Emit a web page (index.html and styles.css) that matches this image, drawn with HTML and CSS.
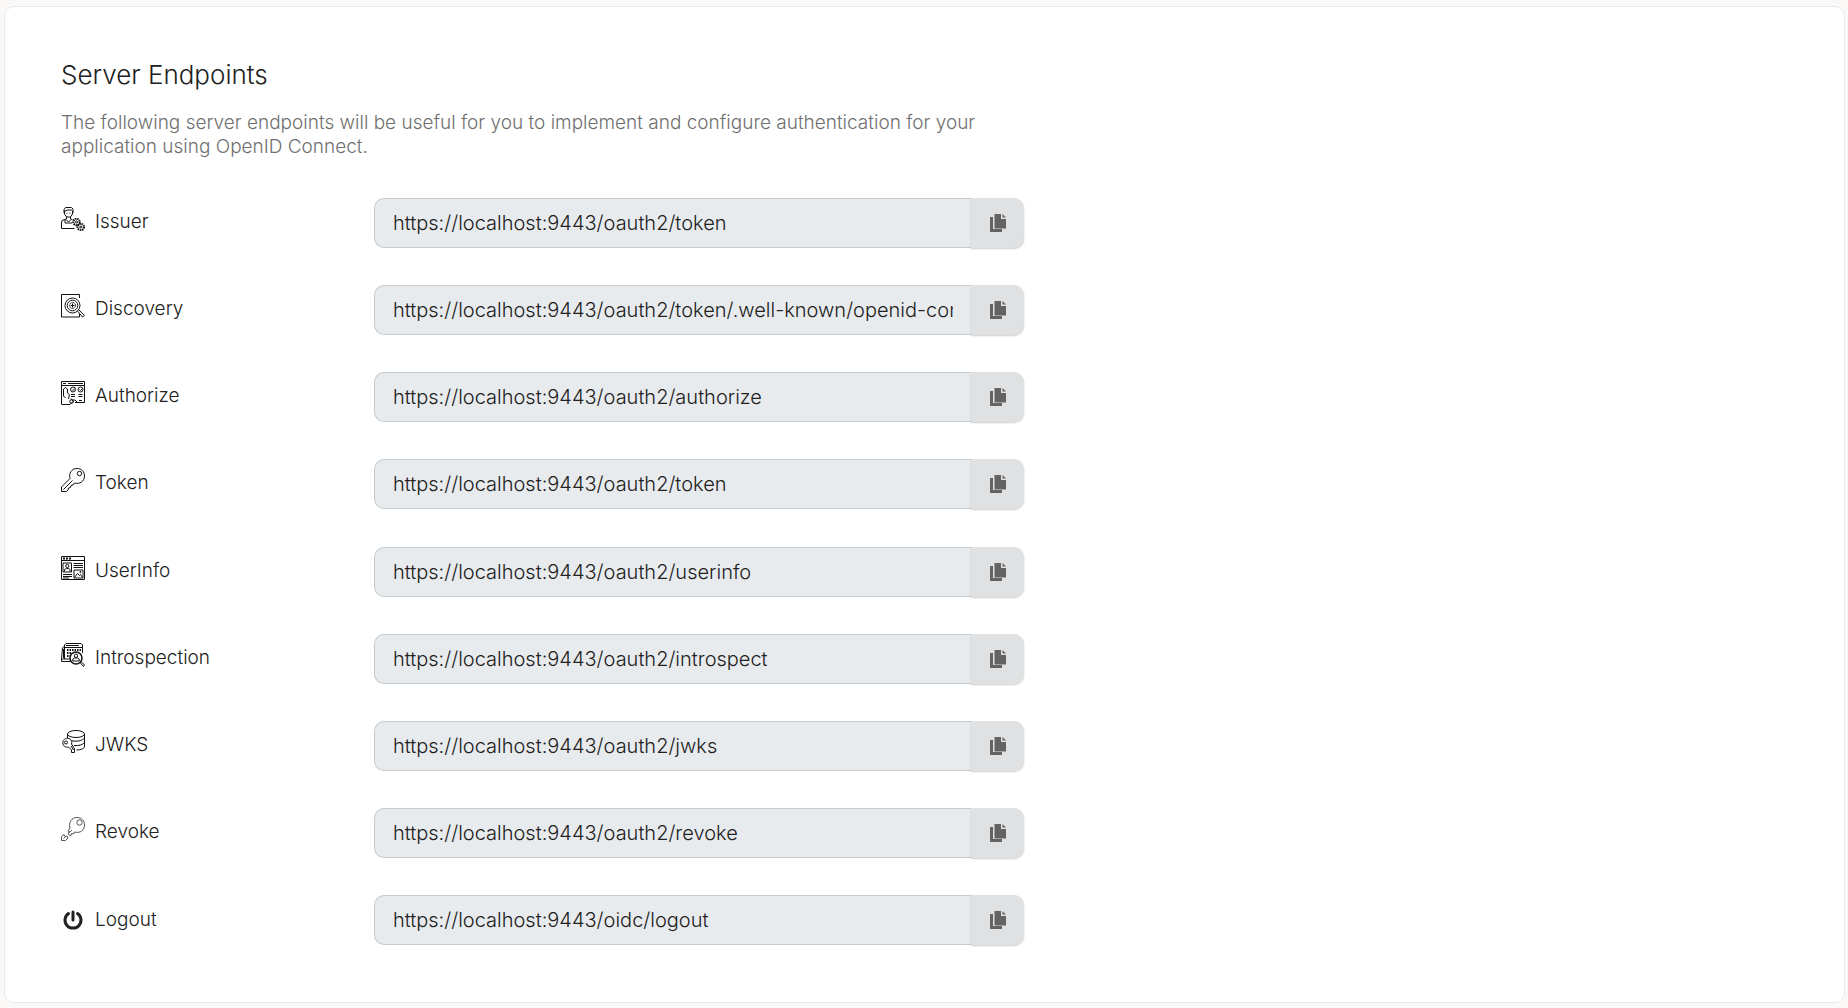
FILE: index.html
```html
<!DOCTYPE html>
<html lang="en">
<head>
<meta charset="utf-8">
<meta name="viewport" content="width=device-width, initial-scale=1">
<title>Server Endpoints</title>
<link rel="stylesheet" href="styles.css">
</head>
<body>
<svg class="sprite" aria-hidden="true">
  <symbol id="copy" viewBox="0 0 18 20">
    <path d="M1 4h3v12h9v3H1z"/>
    <path d="M5.500 1H12v5h5v9.500H5.500z"/>
    <path d="M13.500 1L17 4.500h-3.500z"/>
  </symbol>
</svg>
<main class="card">
  <h1 class="title">Server Endpoints</h1>
  <p class="hint">The following server endpoints will be useful for you to implement and configure authentication for your application using OpenID Connect.</p>
  <div class="endpoints">
    <div class="row">
      <label class="label" for="issuer">
        <svg class="icon" viewBox="0 0 24 24"><path d="M3 6V2.500L4.500.5h6L12 2v4M3 4h2l1-1h5M3.500 4v3l2 3h4l2-3V4M5.500 10v2L1 13.500.5 16v5.500h13M9.500 10v2l2 .7M5 12.500l2.500 2.500 2.500-2.500M4 12v4h7M5.500 6.200h1M8.500 6.200h1"/><circle cx="15.500" cy="15" r="3.200" stroke-dasharray="1.500 .7" stroke-width="2"/><circle cx="15.500" cy="15" r="1"/><circle cx="19.800" cy="20" r="3.200" stroke-dasharray="1.500 .7" stroke-width="2"/><circle cx="19.800" cy="20" r="1"/></svg>
        Issuer</label>
      <div class="field"><input class="url" id="issuer" type="text" readonly value="https://localhost:9443/oauth2/token"><button class="copy" type="button" aria-label="Copy issuer"><svg class="copy-icon"><use href="#copy"/></svg></button></div>
    </div>
    <div class="row">
      <label class="label" for="discovery">
        <svg class="icon" viewBox="0 0 24 24"><path d="M18.500 4V.5H.5v22.500h18v-3"/><circle cx="11.500" cy="11.500" r="7.500"/><circle cx="11.500" cy="11.500" r="5.300"/><circle cx="11.500" cy="11.500" r="3" stroke-dasharray="2 .7"/><path d="M9.500 11.500h4M11.500 9.500v4M16.500 17l5 6 2-1.500-5.500-5.500"/></svg>
        Discovery</label>
      <div class="field"><input class="url" id="discovery" type="text" readonly value="https://localhost:9443/oauth2/token/.well-known/openid-configuration"><button class="copy" type="button" aria-label="Copy discovery"><svg class="copy-icon"><use href="#copy"/></svg></button></div>
    </div>
    <div class="row">
      <label class="label" for="authorize">
        <svg class="icon" viewBox="0 0 24 24"><path d="M.5 23V.5h23V18M.5 4.500h23M2 2.500h3M7 2.500h15M2.500 15V8l2-1.500 2 1.500v4M2.500 15l2 2M6.500 12l2 1.500-1 4.500M.5 23.500H9l3-3-2-3M14 21.500h9.500V18M10 13.500h4M10 15.500h4M17.500 13.500h4M17.500 15.500h4M11 19h3l2 2M18 19.500h3"/><circle cx="12" cy="8.500" r="2.500"/><circle cx="19.500" cy="8.500" r="2.500"/><circle cx="10.500" cy="20.500" r="1.800"/><path d="M11 8.500l1 1 2-2M18.500 8.500l1 1 2-2"/></svg>
        Authorize</label>
      <div class="field"><input class="url" id="authorize" type="text" readonly value="https://localhost:9443/oauth2/authorize"><button class="copy" type="button" aria-label="Copy authorize"><svg class="copy-icon"><use href="#copy"/></svg></button></div>
    </div>
    <div class="row">
      <label class="label" for="token">
        <svg class="icon" viewBox="0 0 24 24"><path d="M9 10.500C7.500 5.500 10.500.5 16 .5c4.500 0 7.500 3 7.500 7.500 0 5.500-5 8.500-10 7L12 17l-2 .5-.5 2-2 .5-.5 2-1.500 1.500h-5v-4.500L9 10.500zM2.500 21.500l9-9"/><circle cx="18.500" cy="5.500" r="2.200"/></svg>
        Token</label>
      <div class="field"><input class="url" id="token" type="text" readonly value="https://localhost:9443/oauth2/token"><button class="copy" type="button" aria-label="Copy token"><svg class="copy-icon"><use href="#copy"/></svg></button></div>
    </div>
    <div class="row">
      <label class="label" for="userinfo">
        <svg class="icon" viewBox="0 0 24 24"><path d="M.5.5h23v23H.5zM.5 4.500h23M2 7h8.500v9H2zM13 14h9v8h-9zM12.500 7.500h9.500M12.500 9.500h9.500M12.500 11.500h9.500M2 18.500h9M2 20.500h9M2 22h6M3.500 15.500v-2l2-1h2l1.500 1v2M13.500 21.500l3-4 2 2 1-1 2 3"/><path d="M2 2.500h2M5 2.500h2M8 2.500h2" stroke-width="2"/><circle cx="6.300" cy="10" r="1.600"/><circle cx="19.500" cy="16" r=".6"/></svg>
        UserInfo</label>
      <div class="field"><input class="url" id="userinfo" type="text" readonly value="https://localhost:9443/oauth2/userinfo"><button class="copy" type="button" aria-label="Copy userinfo"><svg class="copy-icon"><use href="#copy"/></svg></button></div>
    </div>
    <div class="row">
      <label class="label" for="introspection">
        <svg class="icon" viewBox="0 0 24 24"><path d="M3.500 16V2L5 .5h15L21.500 2v8M3.500 4.500h18M5 2.500h13M3.500 3l-2 2L.5 16v2.500h9M1 16h8M2.500 6v9"/><path d="M6 7h14M6 10h5M6 13h3" stroke-dasharray="1.500 1" stroke-width="2"/><circle cx="15" cy="15" r="6" stroke-width="1.500"/><circle cx="15" cy="12.800" r="1.700"/><path d="M11.800 18v-2l1.700-1h3l1.700 1v2zM19 19.500l3.500 4 1-1.500-3.500-3.500"/></svg>
        Introspection</label>
      <div class="field"><input class="url" id="introspection" type="text" readonly value="https://localhost:9443/oauth2/introspect"><button class="copy" type="button" aria-label="Copy introspection"><svg class="copy-icon"><use href="#copy"/></svg></button></div>
    </div>
    <div class="row">
      <label class="label" for="jwks">
        <svg class="icon" viewBox="0 0 24 24"><ellipse cx="15" cy="4" rx="8.500" ry="3.500"/><path d="M6.500 4v4M23.500 4v13c-1 2-4 3-8 3M23.500 8c-2 3-9 4-13 2.500M23.500 12.500c-2 2.500-6 3.500-10.500 3M10 10c-2-3-7-2-8 1.500-1 4 2.500 6.500 5.500 5.500l3 3v2.500h3V19l-3-5c.5-1.500.5-3-.5-4zM10 16l2.500 4"/><circle cx="5" cy="12.500" r="1.500"/></svg>
        JWKS</label>
      <div class="field"><input class="url" id="jwks" type="text" readonly value="https://localhost:9443/oauth2/jwks"><button class="copy" type="button" aria-label="Copy JWKS"><svg class="copy-icon"><use href="#copy"/></svg></button></div>
    </div>
    <div class="row">
      <label class="label" for="revoke">
        <svg class="icon icon-thin" viewBox="0 0 24 24"><path d="M7 14l2-3C7.500 5.500 10.500.5 16 .5c4.500 0 7.500 3 7.500 7.500 0 5.500-4.500 8.500-10 7L12.500 17l-2-.5-.5 2-2-.5-1-2 2-1M7 14l2 1 2-2M.5 19.500L3 17.500l1 2 2-.5 1 2-2.500 2.500h-4zM2.500 21.500l2-2"/><circle cx="18.500" cy="5.500" r="2.700"/></svg>
        Revoke</label>
      <div class="field"><input class="url" id="revoke" type="text" readonly value="https://localhost:9443/oauth2/revoke"><button class="copy" type="button" aria-label="Copy revoke"><svg class="copy-icon"><use href="#copy"/></svg></button></div>
    </div>
    <div class="row">
      <label class="label label-power" for="logout">
        <svg class="icon icon-power" viewBox="0 0 24 24"><path d="M7.500 5.500a8 8 0 1 0 9 0M12 4v8"/></svg>
        Logout</label>
      <div class="field"><input class="url" id="logout" type="text" readonly value="https://localhost:9443/oidc/logout"><button class="copy" type="button" aria-label="Copy logout"><svg class="copy-icon"><use href="#copy"/></svg></button></div>
    </div>
  </div>
</main>
</body>
</html>
```
FILE: styles.css
```css
* {
  box-sizing: border-box;
}

body {
  display: flex;
  flex-direction: column;
  min-height: 100vh;
  margin: 0;
  padding: 6px 3px 5px 4px;
  background: #faf9f8;
  color: #212121;
  font: 19px/24px Inter, "Liberation Sans", sans-serif;
  font-weight: 300;
}

.sprite {
  position: absolute;
  width: 0;
  height: 0;
}

.card {
  display: flex;
  flex: 1;
  flex-direction: column;
  padding: 52px 56px;
  border: 1px solid #e9e9ec;
  border-radius: 10px;
  background: #fff;
}

.title {
  margin: 0;
  font-size: 26px;
  font-weight: 300;
  line-height: 32px;
}

.hint {
  max-width: 963px;
  margin: 20px 0 39px;
  color: #707070;
}

.endpoints {
  display: flex;
  flex: 1;
  flex-direction: column;
  justify-content: space-between;
  gap: 20px;
  max-width: 963px;
  margin-bottom: 5px;
}

.row {
  display: flex;
  align-items: flex-start;
}

.label {
  display: flex;
  flex: 1;
  align-items: flex-start;
  gap: 10px;
  padding-top: 12px;
}

.label-power {
  padding-top: 13px;
}

.icon {
  flex: none;
  width: 24px;
  height: 24px;
  margin-top: -3px;
  fill: none;
  stroke: #111;
  stroke-width: 1;
}

.icon-thin {
  stroke: #555;
}

.icon-power {
  margin-top: 0;
  stroke: #212121;
  stroke-width: 3;
  stroke-linecap: round;
}

.field {
  display: flex;
  width: 650px;
  height: 50px;
}

.url {
  flex: 1;
  min-width: 0;
  padding: 0 18px;
  border: 1px solid #c6cacd;
  border-right: 0;
  border-radius: 10px 0 0 10px;
  background: #e8ebee;
  color: #212121;
  font: inherit;
  font-size: 20px;
}

.copy {
  display: grid;
  place-items: center;
  width: 53px;
  padding: 0;
  border: 0;
  border-radius: 0 10px 10px 0;
  background: #e0e1e2;
  box-shadow: 0 1px 2px #0003;
}

.copy-icon {
  width: 18px;
  height: 20px;
  fill: #636363;
}
```
